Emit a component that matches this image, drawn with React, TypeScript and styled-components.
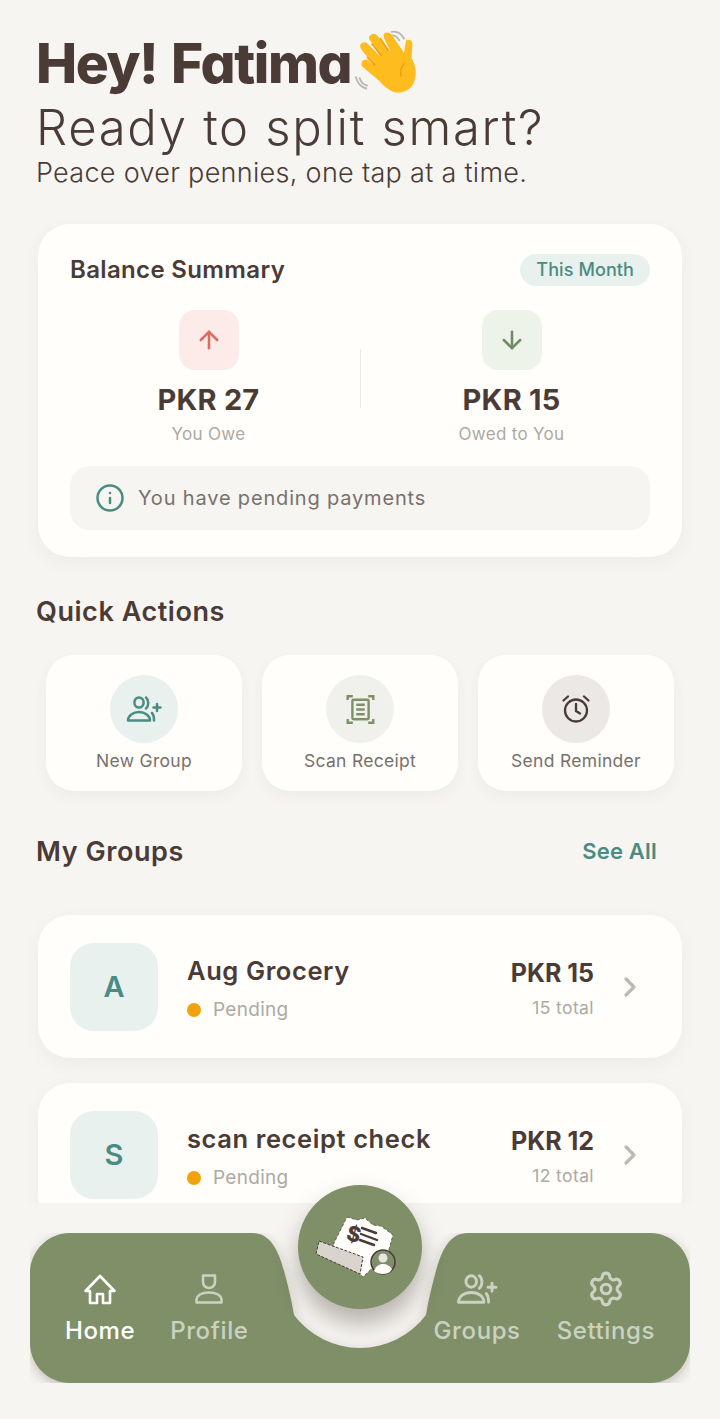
import * as React from 'react';
import styled, { createGlobalStyle } from 'styled-components';
import { ArrowDown, ArrowUp, ChevronRight, Info, Settings } from 'lucide-react';

const colors = {
  page: '#F7F5F2',
  card: '#FFFEFB',
  ink: '#4A3B36',
  muted: '#ADA9A3',
  body: '#78716B',
  teal: '#4A8C82',
  tealSoft: '#E9F1EF',
  sage: '#7F8F68',
  red: '#DE6B63',
  redSoft: '#FCEBE8',
  greenSoft: '#EDF3E8',
  amber: '#F0A30F',
};

const GlobalStyle = createGlobalStyle`
  html, body {
    margin: 0;
    padding: 0;
    background: ${colors.page};
  }
  * {
    box-sizing: border-box;
  }
`;

const Page = styled.div`
  width: 720px;
  height: 1419px;
  overflow: hidden;
  display: flex;
  flex-direction: column;
  background: ${colors.page};
  color: ${colors.ink};
  font-family: Inter, 'Liberation Sans', sans-serif;
`;

const Scroll = styled.main`
  height: 1203px;
  overflow: hidden;
  padding: 28px 36px 0;
  flex: none;
`;

const Greeting = styled.h1`
  display: flex;
  align-items: center;
  height: 70px;
  margin: 0;
  font-size: 55px;
  font-weight: 800;
  letter-spacing: -1.4px;
  word-spacing: 3px;
  line-height: 70px;
  font-feature-settings: 'cv11';
`;

const Wave = styled.svg`
  width: 66px;
  height: 66px;
  flex: none;
  margin: 0 0 0 3px;
`;

const Tagline = styled.div`
  margin-top: 2px;
  font-size: 49px;
  font-weight: 300;
  line-height: 56px;
  letter-spacing: 1.7px;
`;

const Motto = styled.div`
  font-size: 27px;
  font-weight: 300;
  line-height: 34px;
  letter-spacing: 0.3px;
`;

const Card = styled.section`
  margin: 0 2px;
  border-radius: 32px;
  background: ${colors.card};
  box-shadow: 0 6px 18px rgba(74, 59, 54, 0.05);
`;

const SummaryCard = styled(Card)`
  margin-top: 34px;
  padding: 30px 32px 27px;
`;

const SummaryHead = styled.div`
  display: flex;
  align-items: center;
  justify-content: space-between;
`;

const SummaryTitle = styled.h2`
  margin: 0;
  font-size: 24px;
  font-weight: 600;
  line-height: 32px;
  letter-spacing: 0.35px;
`;

const Pill = styled.span`
  padding: 0 16px;
  height: 32px;
  line-height: 31px;
  border-radius: 16px;
  background: ${colors.tealSoft};
  color: ${colors.teal};
  font-size: 18px;
  font-weight: 500;
  letter-spacing: 0.1px;
`;

const Balances = styled.div`
  display: grid;
  grid-template-columns: 302px 1px 302px;
  margin: 24px -12.5px 0;
`;

const Balance = styled.div`
  display: flex;
  flex-direction: column;
  align-items: center;
`;

const BalanceIcon = styled.div<{ $bg: string; $fg: string }>`
  display: flex;
  align-items: center;
  justify-content: center;
  width: 60px;
  height: 60px;
  border-radius: 16px;
  background: ${(p) => p.$bg};
  color: ${(p) => p.$fg};
`;

const BalanceAmount = styled.div`
  margin-top: 10px;
  font-size: 29px;
  font-weight: 700;
  line-height: 40px;
  letter-spacing: 0.2px;
`;

const BalanceLabel = styled.div`
  margin-top: 2px;
  font-size: 17px;
  line-height: 24px;
  color: ${colors.muted};
  letter-spacing: 0.3px;
`;

const Divider = styled.div`
  align-self: start;
  margin-top: 39px;
  height: 59px;
  background: #ece9e4;
`;

const Notice = styled.div`
  display: flex;
  align-items: center;
  gap: 13.5px;
  height: 64px;
  margin-top: 20px;
  padding: 0 24.5px;
  border-radius: 20px;
  background: ${colors.page};
  color: ${colors.body};
  font-size: 20px;
  letter-spacing: 0.83px;
`;

const SectionTitle = styled.h2`
  margin: 0;
  font-size: 27px;
  font-weight: 600;
  line-height: 36px;
  letter-spacing: 0.55px;
`;

const QuickTitle = styled(SectionTitle)`
  margin-top: 37px;
`;

const Tiles = styled.div`
  display: grid;
  grid-template-columns: repeat(3, 196px);
  gap: 20px;
  margin: 25px 10px 0;
`;

const Tile = styled.button`
  display: flex;
  flex-direction: column;
  align-items: center;
  height: 136px;
  padding: 20px 0 0;
  border: 0;
  border-radius: 28px;
  background: ${colors.card};
  box-shadow: 0 6px 14px rgba(74, 59, 54, 0.05);
  color: ${colors.body};
  font: inherit;
  font-size: 17.5px;
  letter-spacing: 0.3px;
`;

const TileIcon = styled.span<{ $bg: string; $fg: string }>`
  display: flex;
  align-items: center;
  justify-content: center;
  width: 68px;
  height: 68px;
  margin-bottom: 7px;
  border-radius: 50%;
  background: ${(p) => p.$bg};
  color: ${(p) => p.$fg};
`;

const GroupsHead = styled.div`
  display: flex;
  align-items: center;
  justify-content: space-between;
  margin-top: 43px;
  padding-right: 27px;
`;

const SeeAll = styled.a`
  margin-bottom: 2px;
  color: ${colors.teal};
  font-size: 22px;
  font-weight: 600;
  letter-spacing: 0.2px;
`;

const GroupList = styled.div`
  display: flex;
  flex-direction: column;
  gap: 25px;
  margin-top: 45px;
`;

const GroupCard = styled(Card)`
  display: flex;
  align-items: center;
  height: 143px;
  margin: 0 2px;
  padding: 0 36px 0 32px;
`;

const Avatar = styled.div`
  display: flex;
  align-items: center;
  justify-content: center;
  flex: none;
  width: 88px;
  height: 88px;
  border-radius: 24px;
  background: ${colors.tealSoft};
  color: ${colors.teal};
  font-size: 29px;
  font-weight: 600;
`;

const GroupInfo = styled.div`
  flex: 1;
  margin-left: 29px;
  padding-top: 8px;
`;

const GroupName = styled.div`
  font-size: 25.5px;
  font-weight: 600;
  line-height: 36px;
  letter-spacing: 0.6px;
`;

const GroupStatus = styled.div`
  display: flex;
  align-items: center;
  gap: 12px;
  margin-top: 2px;
  color: ${colors.muted};
  font-size: 19px;
  line-height: 38px;
  letter-spacing: 0.3px;
`;

const Dot = styled.span`
  width: 14px;
  height: 14px;
  border-radius: 50%;
  background: ${colors.amber};
`;

const GroupFigures = styled.div`
  text-align: right;
  padding-top: 3px;
`;

const GroupAmount = styled.div`
  font-size: 25px;
  font-weight: 700;
  line-height: 36px;
`;

const GroupTotal = styled.div`
  margin-top: 3px;
  color: ${colors.muted};
  font-size: 17.5px;
  line-height: 28px;
  letter-spacing: 0.4px;
`;

const Chevron = styled(ChevronRight)`
  flex: none;
  margin-left: 20px;
  color: #bdb9b3;
`;

const NavSlot = styled.div`
  position: relative;
  height: 150px;
  margin: 30px 30px 0;
`;

const NavShape = styled.svg`
  position: absolute;
  inset: 0;
  width: 660px;
  height: 150px;
`;

const NavBar = styled.nav`
  position: relative;
  display: flex;
  justify-content: space-between;
  padding: 38px 35px 0;
`;

const NavGroup = styled.div<{ $gap: number }>`
  display: flex;
  gap: ${(p) => p.$gap}px;
`;

const NavItem = styled.a<{ $active?: boolean }>`
  display: flex;
  flex-direction: column;
  align-items: center;
  color: ${(p) => (p.$active ? '#FFFFFF' : 'rgba(255, 255, 255, 0.6)')};
  font-size: 24px;
  font-weight: 500;
  line-height: 32px;
  letter-spacing: 0.6px;
`;

const NavIcon = styled.span`
  display: flex;
  align-items: center;
  justify-content: center;
  height: 36px;
  margin-bottom: 8px;
`;

const Fab = styled.button`
  position: absolute;
  left: 268px;
  top: -48px;
  display: flex;
  align-items: center;
  justify-content: center;
  width: 124px;
  height: 124px;
  padding: 0;
  border: 0;
  border-radius: 50%;
  background: ${colors.sage};
  box-shadow: 0 14px 24px rgba(60, 50, 40, 0.36);
`;

const FabArt = styled.svg`
  width: 85px;
  height: 68px;
  margin: 0 5px 2px 0;
`;

const WaveIcon = () => (
  <Wave viewBox="0 0 70 70" aria-hidden="true">
    <g fill="none" stroke="#B9B8B2" strokeWidth="2" strokeLinecap="round">
      <path d="M38 6c4-1 8 1 10 5" />
      <path d="M40 2c5-1 10 2 13 7" />
      <path d="M6 51c1 4 4 7 8 8" />
      <path d="M2 50c1 6 6 11 11 12" />
    </g>
    <path
      d="M56 11c3-2 6 0 6 4l-1 15c5 8 6 19 2 27-4 7-12 11-20 9-6-2-11-6-16-12L9 39c-2-3-1-6 1-7 2-1 4-1 6 1l5 4-13-16c-2-3-2-6 0-7 3-2 5-1 7 1l13 13-11-17c-2-3-1-5 1-6 2-2 5-1 7 1l14 17-7-14c-1-3-1-5 1-6 3-1 5 0 7 2l13 19c1-6 2-12 3-16z"
      fill="#FFBC1F"
    />
    <g fill="none" stroke="#EE9D10" strokeWidth="1.5" strokeLinecap="round">
      <path d="M22 37l-8-8" />
      <path d="M29 27L19 15" />
      <path d="M36 21l-8-12" />
      <path d="M53 36c-3 3-4 8-3 13" />
    </g>
  </Wave>
);

const PeoplePlusIcon = ({ width = 36, height = 26 }: { width?: number; height?: number }) => (
  <svg width={width} height={height} viewBox="0 0 36 26" fill="none" stroke="currentColor" strokeWidth="2.5" strokeLinecap="round" aria-hidden="true">
    <ellipse cx="13" cy="6.500" rx="4.600" ry="5" />
    <path d="M2 24.500c0-5 5-8.500 11-8.500s11 3.500 11 8.500z" strokeLinejoin="round" />
    <path d="M20 1.500c3 2.500 3 8.500 0 11" />
    <path d="M26 17c1.500 1.500 2 4 2 7.500" />
    <path d="M31 8v7M27.500 11.500h7" />
  </svg>
);

const ProfileIcon = () => (
  <svg width="28" height="30" viewBox="0 0 28 30" fill="none" stroke="currentColor" strokeWidth="2.6" strokeLinejoin="round" aria-hidden="true">
    <path d="M8 1.500h12v6.500a6 6 0 0 1-12 0z" />
    <path d="M1.500 28.500v-2c0-5 5-8 12.500-8s12.500 3 12.500 8v2z" />
  </svg>
);

const HomeIcon = () => (
  <svg width="34" height="31" viewBox="0 0 34 31" fill="none" stroke="currentColor" strokeWidth="2.6" strokeLinejoin="round" aria-hidden="true">
    <path d="M17 2L2.500 17H7v12h7v-9h6v9h7V17h4.500z" />
  </svg>
);

const ScanIcon = () => (
  <svg width="29" height="31" viewBox="0 0 34 36" fill="none" stroke="currentColor" strokeWidth="2.800" aria-hidden="true">
    <path d="M2 7V2.500h6M26 2.500h6V7M2 29v4.500h6M26 33.500h6V29" />
    <rect x="7.500" y="6.500" width="19" height="23" rx="1.500" />
    <path d="M12 12.500h10M12 18h10M12 23.500h10" />
  </svg>
);

const AlarmIcon = () => (
  <svg width="30" height="30" viewBox="0 0 30 30" fill="none" stroke="currentColor" strokeWidth="2.300" strokeLinecap="round" aria-hidden="true">
    <circle cx="15" cy="16.500" r="11" />
    <path d="M15 10v7l4 2.500" />
    <path d="M2.500 6.500L7 2.500M27.500 6.500L23 2.500" />
  </svg>
);

const FabIllustration = () => (
  <FabArt viewBox="0 0 85 68" aria-hidden="true">
    <path d="M32 5l10 3 8-2 8 7 8 1 12 9-5 18-25 24-30-32z" fill="#FFFEFB" stroke="#5A4A45" strokeWidth="0.800" strokeDasharray="3 2" />
    <text x="32" y="29" fontFamily="Inter, sans-serif" fontSize="21" fontWeight="800" fill="#4A3B36" transform="rotate(15 37 22)">$</text>
    <path d="M47 16l14 5M46 22l16 6M45 28l14 5" stroke="#4A3B36" strokeWidth="2.400" strokeLinecap="round" />
    <path d="M4 29l44 16-3 17L1 42z" fill="#D9D5CE" stroke="#4A3B36" strokeWidth="1" strokeDasharray="3 1.500" />
    <circle cx="68" cy="50" r="12" fill="#7F8F68" stroke="#4A3B36" strokeWidth="1.500" />
    <circle cx="68" cy="46" r="4.500" fill="#E8E6E0" />
    <path d="M59 59c2-5 5-7 9-7s7 2 9 5c-2 4-5 5-9 5s-7-1-9-3z" fill="#FFFEFB" />
  </FabArt>
);

const groups = [
  { initial: 'A', name: 'Aug Grocery', amount: 'PKR 15', total: '15 total' },
  { initial: 'S', name: 'scan receipt check', amount: 'PKR 12', total: '12 total' },
];

export default function App() {
  return (
    <Page>
      <GlobalStyle />
      <Scroll>
        <Greeting>
          Hey! Fatima
          <WaveIcon />
        </Greeting>
        <Tagline>Ready to split smart?</Tagline>
        <Motto>Peace over pennies, one tap at a time.</Motto>

        <SummaryCard>
          <SummaryHead>
            <SummaryTitle>Balance Summary</SummaryTitle>
            <Pill>This Month</Pill>
          </SummaryHead>
          <Balances>
            <Balance>
              <BalanceIcon $bg={colors.redSoft} $fg={colors.red}>
                <ArrowUp size={28} strokeWidth={2.2} />
              </BalanceIcon>
              <BalanceAmount>PKR 27</BalanceAmount>
              <BalanceLabel>You Owe</BalanceLabel>
            </Balance>
            <Divider />
            <Balance>
              <BalanceIcon $bg={colors.greenSoft} $fg="#728A68">
                <ArrowDown size={28} strokeWidth={2.2} />
              </BalanceIcon>
              <BalanceAmount>PKR 15</BalanceAmount>
              <BalanceLabel>Owed to You</BalanceLabel>
            </Balance>
          </Balances>
          <Notice>
            <Info size={30} strokeWidth={2} color={colors.teal} />
            You have pending payments
          </Notice>
        </SummaryCard>

        <QuickTitle>Quick Actions</QuickTitle>
        <Tiles>
          <Tile>
            <TileIcon $bg={colors.tealSoft} $fg={colors.teal}>
              <PeoplePlusIcon />
            </TileIcon>
            New Group
          </Tile>
          <Tile>
            <TileIcon $bg="#F0F1EC" $fg={colors.sage}>
              <ScanIcon />
            </TileIcon>
            Scan Receipt
          </Tile>
          <Tile>
            <TileIcon $bg="#EBE8E5" $fg={colors.ink}>
              <AlarmIcon />
            </TileIcon>
            Send Reminder
          </Tile>
        </Tiles>

        <GroupsHead>
          <SectionTitle>My Groups</SectionTitle>
          <SeeAll>See All</SeeAll>
        </GroupsHead>
        <GroupList>
          {groups.map((group) => (
            <GroupCard key={group.initial}>
              <Avatar>{group.initial}</Avatar>
              <GroupInfo>
                <GroupName>{group.name}</GroupName>
                <GroupStatus>
                  <Dot />
                  Pending
                </GroupStatus>
              </GroupInfo>
              <GroupFigures>
                <GroupAmount>{group.amount}</GroupAmount>
                <GroupTotal>{group.total}</GroupTotal>
              </GroupFigures>
              <Chevron size={32} strokeWidth={2.4} />
            </GroupCard>
          ))}
        </GroupList>
      </Scroll>

      <NavSlot>
        <NavShape viewBox="0 0 660 150" aria-hidden="true">
          <defs>
            <filter id="navShadow" x="-5%" y="-10%" width="110%" height="130%">
              <feDropShadow dx="0" dy="4" stdDeviation="6" floodColor="#3c3228" floodOpacity="0.28" />
            </filter>
          </defs>
          <path
            d="M40 0H222C240 0 248 16 254 38C259 56 262 70 264 82A82.500 82.500 0 0 0 396 82C398 70 401 56 406 38C412 16 420 0 438 0H620C642 0 660 18 660 40V110C660 132 642 150 620 150H40C18 150 0 132 0 110V40C0 18 18 0 40 0Z"
            fill={colors.sage}
            filter="url(#navShadow)"
          />
        </NavShape>
        <NavBar>
          <NavGroup $gap={35}>
            <NavItem $active>
              <NavIcon>
                <HomeIcon />
              </NavIcon>
              Home
            </NavItem>
            <NavItem>
              <NavIcon>
                <ProfileIcon />
              </NavIcon>
              Profile
            </NavItem>
          </NavGroup>
          <NavGroup $gap={36}>
            <NavItem>
              <NavIcon>
                <PeoplePlusIcon width={42} height={30} />
              </NavIcon>
              Groups
            </NavItem>
            <NavItem>
              <NavIcon>
                <Settings size={38} strokeWidth={2} />
              </NavIcon>
              Settings
            </NavItem>
          </NavGroup>
        </NavBar>
        <Fab>
          <FabIllustration />
        </Fab>
      </NavSlot>
    </Page>
  );
}
